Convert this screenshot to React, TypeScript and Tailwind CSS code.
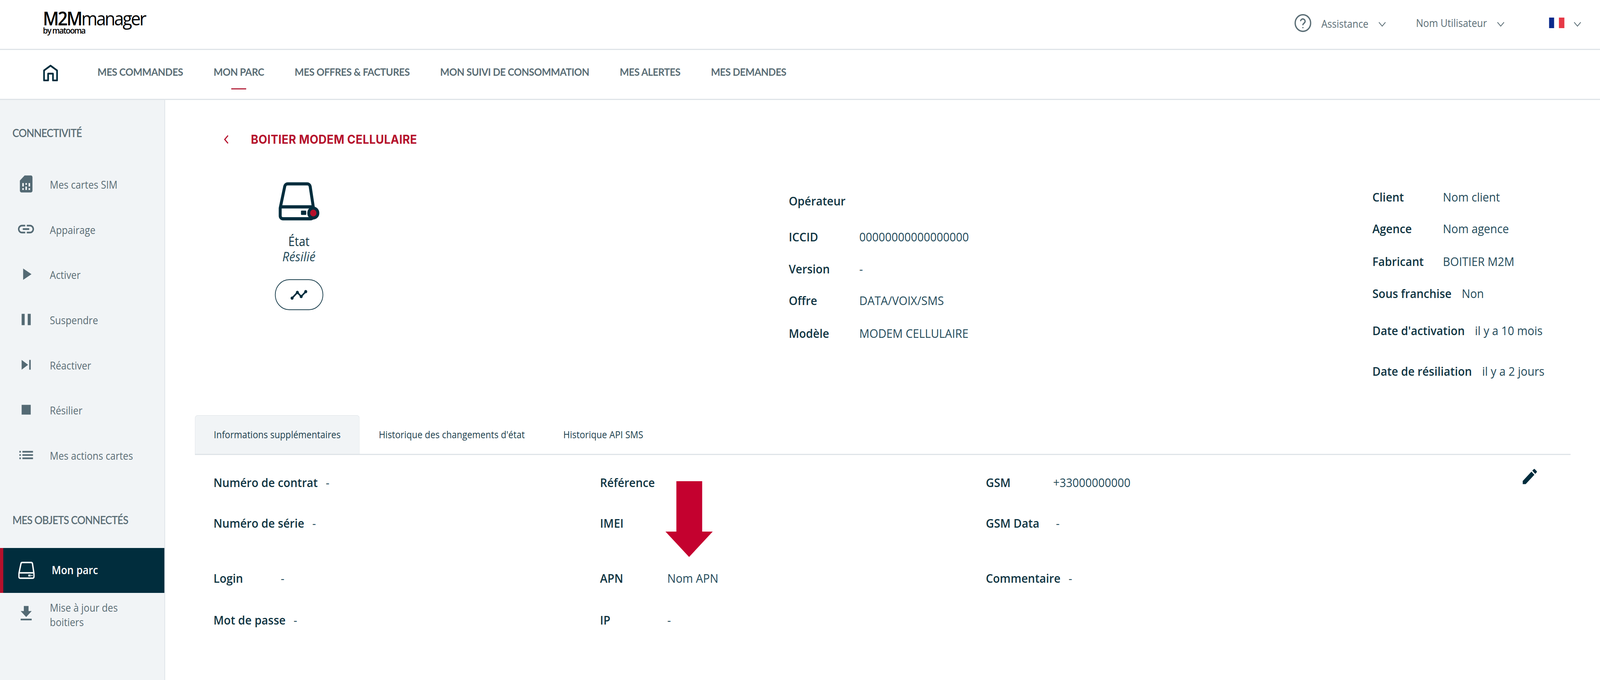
import React from "react";

const OS = "font-['Open_Sans',sans-serif]";
const LA = "font-['Lato',sans-serif]";

function Mat({ d, size = 53, className = "" }: { d: string; size?: number; className?: string }) {
  return (
    <svg viewBox="0 0 24 24" width={size} height={size} fill="currentColor" className={className}>
      <path d={d} />
    </svg>
  );
}

function Chevron({ w = 20, h = 12 }: { w?: number; h?: number }) {
  return (
    <svg viewBox="0 0 20 12" width={w} height={h} fill="none" stroke="#5a6d75" strokeWidth="2">
      <polyline points="1,1 10,11 19,1" />
    </svg>
  );
}

function HddIcon({ color, w, h, dot = false }: { color: string; w: number; h: number; dot?: boolean }) {
  return (
    <svg viewBox="0 0 50 44" width={w} height={h} fill="none" stroke={color} strokeWidth="3.6" strokeLinejoin="round">
      <path d="M11 2h24a3.6 3.6 0 0 1 3.5 3L42.5 29.5v8.7a3.3 3.3 0 0 1-3.3 3.3H5.3A3.3 3.3 0 0 1 2 38.2v-8.7L7.5 5A3.6 3.6 0 0 1 11 2z" />
      <path d="M2.5 28h39.5" />
      <rect x="28" y="33" width="5" height="3.4" fill={color} strokeWidth="1.4" />
      {dot ? (
        <circle cx="42.3" cy="35" r="5.6" fill="#b5112c" stroke={color} strokeWidth="3.4" />
      ) : (
        <circle cx="37" cy="34.7" r="1.6" fill={color} stroke="none" />
      )}
    </svg>
  );
}

function Field({
  label,
  value,
  minW,
  className = "",
  gap = "pr-[22px]",
}: {
  label: string;
  value?: string;
  minW: string;
  className?: string;
  gap?: string;
}) {
  return (
    <div className={`flex items-center h-[44px] leading-[44px] whitespace-nowrap ${OS} ${className}`}>
      <span className={`font-semibold text-[31px] text-[#0f3442] ${gap} ${minW}`}>{label}</span>
      {value && <span className="text-[31px] text-[#234a5a]">{value}</span>}
    </div>
  );
}

const nav = ["MES COMMANDES", "MON PARC", "MES OFFRES & FACTURES", "MON SUIVI DE CONSOMMATION", "MES ALERTES", "MES DEMANDES"];

const sideItems: { label: string; d: string; size: number }[] = [
  { label: "Mes cartes SIM", size: 52, d: "M19.99 4c0-1.1-.89-2-1.99-2h-8L4 8v12c0 1.1.9 2 2 2h12c1.1 0 2-.9 2-2l-.01-16zM9 19H7v-2h2v2zm8 0h-2v-2h2v2zm-8-4H7v-4h2v4zm4 4h-2v-4h2v4zm0-6h-2v-2h2v2zm4 2h-2v-4h2v4z" },
  { label: "Appairage", size: 53, d: "M3.9 12c0-1.71 1.39-3.1 3.1-3.1h4V7H7c-2.76 0-5 2.24-5 5s2.24 5 5 5h4v-1.9H7c-1.71 0-3.1-1.39-3.1-3.1zM8 13h8v-2H8v2zm9-6h-4v1.9h4c1.71 0 3.1 1.39 3.1 3.1s-1.39 3.1-3.1 3.1h-4V17h4c2.76 0 5-2.24 5-5s-2.24-5-5-5z" },
  { label: "Activer", size: 50, d: "M8 5v14l11-7z" },
  { label: "Suspendre", size: 50, d: "M6 19h4V5H6v14zm8-14v14h4V5h-4z" },
  { label: "Réactiver", size: 50, d: "M6 18l8.5-6L6 6v12zM16 6v12h2V6h-2z" },
  { label: "Résilier", size: 50, d: "M6 6h12v12H6z" },
  { label: "Mes actions cartes", size: 50, d: "M3 13h2v-2H3v2zm0 4h2v-2H3v2zm0-8h2V7H3v2zm4 4h14v-2H7v2zm0 4h14v-2H7v2zM7 7v2h14V7H7z" },
];

const infoRows: { mt: string; cols: [string, string | undefined, string][] }[] = [
  { mt: "mt-0", cols: [["Numéro de contrat", "-", "min-w-[185px]"], ["Référence", undefined, "min-w-[185px]"], ["GSM", "+33000000000", "min-w-[185px]"]] },
  { mt: "mt-[60px]", cols: [["Numéro de série", "-", "min-w-[185px]"], ["IMEI", undefined, "min-w-[185px]"], ["GSM Data", "-", "min-w-[193px]"]] },
  { mt: "mt-[97px]", cols: [["Login", "-", "min-w-[185px]"], ["APN", "Nom APN", "min-w-[185px]"], ["Commentaire", "-", "min-w-[185px]"]] },
  { mt: "mt-[63px]", cols: [["Mot de passe", "-", "min-w-[185px]"], ["IP", "-", "min-w-[185px]"], ["", undefined, ""]] },
];

export default function App() {
  // The page is designed for 4400px; a narrower window fits it by width.
  const fit = Math.min(1, window.innerWidth / 4400);
  return (
    <div className="w-full h-[1741px] overflow-hidden bg-white">
      <div
        className={`flex flex-col w-[4400px] h-[1741px] origin-top-left bg-white ${OS}`}
        style={{ transform: `scaleX(${fit})` }}
      >
        {/* top bar */}
        <header className="flex items-start justify-between h-[128px] shrink-0 border-b-[3px] border-[#dfe4e8] pl-[118px]">
          <div className="pt-[24px] text-black leading-none">
            <div className={`text-[48px] leading-[46px] tracking-[-3.4px] ${OS}`}>
              <span className="font-semibold">M2M</span>
              <span>manager</span>
            </div>
            <div className={`text-[22px] leading-[18px] tracking-[-1.8px] font-semibold -mt-[2px] ${OS}`}>by matooma</div>
          </div>
          <div className="flex items-center h-[118px] pr-[52px] text-[#5a6d75] text-[26.5px]">
            <svg viewBox="0 0 24 24" width="50" height="50" fill="none" stroke="#5a6d75" strokeWidth="1.7" strokeLinecap="round" strokeLinejoin="round">
              <circle cx="12" cy="12" r="10.2" />
              <path d="M9.09 9a3 3 0 0 1 5.83 1c0 2-2.9 2.6-2.9 4" />
              <path d="M12 17.6h.01" />
            </svg>
            <span className="ml-[26px] pt-[6px]">Assistance</span>
            <span className="ml-[28px] pt-[6px]"><Chevron /></span>
            <span className="ml-[83px] pt-[2px]">Nom Utilisateur</span>
            <span className="ml-[28px] pt-[6px]"><Chevron /></span>
            <div className="ml-[123px] flex h-[27px] w-[42px] -mt-[2px]">
              <div className="w-[14px] bg-[#0a2a8c]" />
              <div className="w-[13px] bg-white" />
              <div className="w-[15px] bg-[#e63946]" />
            </div>
            <span className="ml-[26px] pt-[6px]"><Chevron /></span>
          </div>
        </header>

        {/* nav bar */}
        <nav className="flex items-center h-[128px] shrink-0 border-b-[3px] border-[#dfe4e8] pl-[118px]">
          <svg viewBox="0 0 41 42" width="42" height="43" fill="none" stroke="#012d3d" strokeWidth="4.4" strokeLinejoin="round" className="-mt-[8px]">
            <path d="M3 40V15L20.5 3 38 15v25H27V23H14v17z" />
          </svg>
          <div className="flex ml-[108px] gap-[84px] -mt-[14px]">
            {nav.map((n) => (
              <div key={n} className={`relative text-[27px] leading-[36px] font-bold tracking-[-0.6px] text-[#5a6d75] whitespace-nowrap ${LA}`}>
                {n}
                {n === "MON PARC" && <div className="absolute left-[49px] top-[60px] w-[41px] h-[3px] bg-[#b5263f]" />}
              </div>
            ))}
          </div>
        </nav>

        <div className="flex flex-1 min-h-0">
          {/* sidebar */}
          <aside className="w-[454px] shrink-0 bg-[#f1f4f6] border-r-[2px] border-[#dfe4e8] pt-[64px] text-[#5a6d75]">
            <div className={`pl-[34px] text-[28px] leading-[40px] font-semibold tracking-[-1px] ${LA}`}>CONNECTIVITÉ</div>
            <div className="mt-[55px]">
              {sideItems.map((it) => (
                <div key={it.label} className="flex items-center h-[115.7px] pl-[45px]">
                  <div className="w-[53px] flex justify-center -mt-[4px] text-[#546a74]">
                    <Mat d={it.d} size={it.size} />
                  </div>
                  <span className="ml-[39px] text-[26.5px] leading-[38px]">{it.label}</span>
                </div>
              ))}
            </div>
            <div className={`mt-[86px] pl-[34px] text-[28px] leading-[40px] font-semibold tracking-[-1px] whitespace-nowrap ${LA}`}>MES OBJETS CONNECTÉS</div>
            <div className="mt-[52px] flex items-center h-[115px] bg-[#012d3d] border-l-[9px] border-[#b5112c] pl-[41px]">
              <HddIcon color="#ffffff" w={51} h={45} />
              <span className="ml-[41px] text-[28px] font-semibold text-white -mt-[2px]">Mon parc</span>
            </div>
            <div className="flex items-center pt-[20px] pl-[45px]">
              <div className="w-[53px] flex justify-center -mt-[8px] text-[#546a74]">
                <Mat d="M19 9h-4V3H9v6H5l7 7 7-7zM5 18v2h14v-2H5z" size={52} />
              </div>
              <span className="ml-[39px] w-[240px] text-[26.5px] leading-[37px]">Mise à jour des boitiers</span>
            </div>
          </aside>

          {/* main */}
          <main className="relative flex-1 min-w-0 pl-[82px] pr-[81px] pt-[81px]">
            <div className="flex items-center h-[40px] pl-[79px]">
              <svg viewBox="0 0 14 24" width="14" height="24" fill="none" stroke="#b5112c" strokeWidth="3">
                <polyline points="12,2 3,12 12,22" />
              </svg>
              <h1 className="ml-[61px] text-[31px] leading-[40px] font-bold tracking-[0.4px] text-[#b5112c] font-['Inter',sans-serif] whitespace-nowrap">
                BOITIER MODEM CELLULAIRE
              </h1>
            </div>

            <section className="grid grid-cols-[1633px_1605px_1fr] h-[597px] mt-[89px]">
              <div className="w-[572px] flex flex-col items-center text-[#0f3442]">
                <HddIcon color="#012d3d" w={113} h={100} dot />
                <div className="mt-[30px] text-[32px] leading-[44px] font-normal">État</div>
                <div className="-mt-[5px] text-[33px] leading-[44px] italic text-[#234a5a]">Résilié</div>
                <button className="mt-[36px] flex items-center justify-center w-[133px] h-[79px] rounded-[40px] border-[2px] border-[#1e4250] text-[#012d3d]">
                  <Mat size={50} d="M23 8c0 1.1-.9 2-2 2-.18 0-.35-.02-.51-.07l-3.56 3.55c.05.16.07.34.07.52 0 1.1-.9 2-2 2s-2-.9-2-2c0-.18.02-.36.07-.52l-2.55-2.55c-.16.05-.34.07-.52.07s-.36-.02-.52-.07l-4.55 4.56c.05.16.07.33.07.51 0 1.1-.9 2-2 2s-2-.9-2-2 .9-2 2-2c.18 0 .35.02.51.07l4.56-4.55C8.02 9.36 8 9.18 8 9c0-1.1.9-2 2-2s2 .9 2 2c0 .18-.02.36-.07.52l2.55 2.55c.16-.05.34-.07.52-.07s.36.02.52.07l3.55-3.56C19.02 8.35 19 8.18 19 8c0-1.1.9-2 2-2s2 .9 2 2z" />
                </button>
              </div>
              <div className="pt-[26px]">
                <Field label="Opérateur" minW="min-w-[194px]" />
                <Field label="ICCID" value="00000000000000000" minW="min-w-[194px]" className="mt-[48px]" />
                <Field label="Version" value="-" minW="min-w-[194px]" className="mt-[38px]" />
                <Field label="Offre" value="DATA/VOIX/SMS" minW="min-w-[194px]" className="mt-[37px]" />
                <Field label="Modèle" value="MODEM CELLULAIRE" minW="min-w-[194px]" className="mt-[40px]" />
              </div>
              <div className="pt-[16px]">
                <Field label="Client" value="Nom client" minW="min-w-[194px]" gap="pr-[28px]" />
                <Field label="Agence" value="Nom agence" minW="min-w-[194px]" gap="pr-[28px]" className="mt-[37px]" />
                <Field label="Fabricant" value="BOITIER M2M" minW="min-w-[194px]" gap="pr-[28px]" className="mt-[40px]" />
                <Field label="Sous franchise" value="Non" minW="min-w-[194px]" gap="pr-[28px]" className="mt-[38px]" />
                <Field label="Date d'activation" value="il y a 10 mois" minW="min-w-[194px]" gap="pr-[28px]" className="mt-[51px]" />
                <Field label="Date de résiliation" value="il y a 2 jours" minW="min-w-[194px]" gap="pr-[28px]" className="mt-[60px]" />
              </div>
            </section>

            {/* tabs */}
            <div className="flex h-[102px] border-b-[3px] border-[#dfe4e8] text-[24.7px] text-[#1c3f4e]">
              <div className="flex items-center px-[51px] bg-[#f1f4f6] border border-b-0 border-[#dfe4e8] rounded-t-[8px]">Informations supplémentaires</div>
              <div className="flex items-center px-[53px]">Historique des changements d'état</div>
              <div className="flex items-center px-[53px]">Historique API SMS</div>
            </div>

            {/* info */}
            <section className="relative pt-[48px] pl-[51px]">
              {infoRows.map((r, i) => (
                <div key={i} className={`grid grid-cols-[1063px_1061px_1fr] ${r.mt}`}>
                  {r.cols.map(([l, v, m], j) =>
                    l ? <Field key={j} label={l} value={v} minW={m} /> : <div key={j} />,
                  )}
                </div>
              ))}
              <div className="absolute right-[86px] top-[29px] text-[#012d3d]">
                <Mat size={52} d="M3 17.25V21h3.75L17.81 9.94l-3.75-3.75L3 17.25zM20.71 7.04c.39-.39.39-1.02 0-1.41l-2.34-2.34c-.39-.39-1.02-.39-1.41 0l-1.83 1.83 3.75 3.75 1.83-1.83z" />
              </div>
            </section>

            {/* annotation arrow */}
            <svg viewBox="0 0 130 194" width="130" height="194" className="absolute left-[1376px] top-[976px]">
              <polygon points="30,0 101,0 101,129 130,129 65,194 0,129 30,129" fill="#c4012f" />
            </svg>
          </main>
        </div>
      </div>
    </div>
  );
}
